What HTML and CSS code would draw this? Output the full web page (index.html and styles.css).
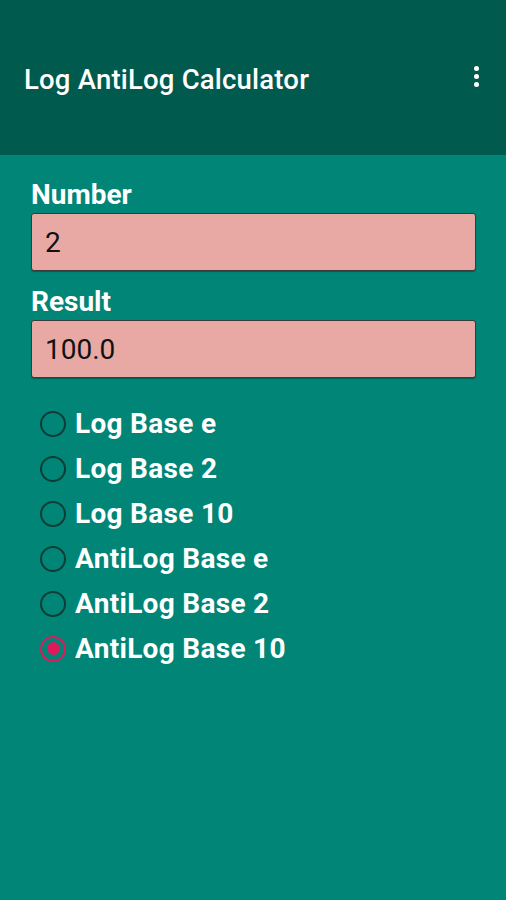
FILE: index.html
```html
<!DOCTYPE html>
<html>
<head>
<meta charset="utf-8">
<link rel="stylesheet" href="styles.css">
</head>
<body>
<header class="appbar">
  <h1 class="title">Log AntiLog Calculator</h1>
  <div class="menu"><span></span><span></span><span></span></div>
</header>
<main class="content">
  <label class="label">Number</label>
  <div class="field">2</div>
  <label class="label">Result</label>
  <div class="field">100.0</div>
  <ul class="radios">
    <li class="radio"><span class="dot"></span>Log Base e</li>
    <li class="radio"><span class="dot"></span>Log Base 2</li>
    <li class="radio"><span class="dot"></span>Log Base 10</li>
    <li class="radio"><span class="dot"></span>AntiLog Base e</li>
    <li class="radio"><span class="dot"></span>AntiLog Base 2</li>
    <li class="radio checked"><span class="dot"></span>AntiLog Base 10</li>
  </ul>
</main>
</body>
</html>
```
FILE: styles.css
```css
html, body {
  margin: 0;
  padding: 0;
  height: 100%;
}
body {
  background: #008577;
  font-family: Roboto, "Noto Sans", sans-serif;
  color: #fff;
}
.appbar {
  height: 155px;
  background: #005a4e;
  display: flex;
  align-items: center;
  justify-content: space-between;
  padding: 0 24px 0 24px;
  box-sizing: border-box;
}
.title {
  margin: 0;
  font-size: 27.5px;
  font-weight: 500;
  letter-spacing: 0.2px;
  margin-top: 3px;
}
.menu {
  display: flex;
  flex-direction: column;
  gap: 3px;
  margin-right: 3px;
  margin-top: -2px;
}
.menu span {
  width: 5px;
  height: 5px;
  border-radius: 50%;
  background: #fff;
}
.content {
  padding: 24px 30px 0 31px;
  display: flex;
  flex-direction: column;
}
.label {
  font-size: 28px;
  font-weight: 700;
  line-height: 32px;
  margin-bottom: 2px;
}
.field {
  height: 56px;
  background: #e8a9a5;
  border: 1px solid #3a3a3a;
  border-radius: 3px;
  font-size: 28px;
  color: #111;
  display: flex;
  align-items: center;
  padding-left: 13px;
  margin-bottom: 15px;
  box-shadow: 0 1px 1px rgba(0,0,0,0.3);
}
.radios {
  list-style: none;
  margin: 8px 0 0 0;
  padding: 0;
  display: flex;
  flex-direction: column;
}
.radio {
  height: 45px;
  display: flex;
  align-items: center;
  font-size: 28px;
  font-weight: 700;
  letter-spacing: 0.3px;
  gap: 9px;
  padding-left: 9px;
}
.dot {
  width: 26px;
  height: 26px;
  border: 2.5px solid #0c3d37;
  border-radius: 50%;
  box-sizing: border-box;
  display: flex;
  align-items: center;
  justify-content: center;
  flex-shrink: 0;
}
.radio.checked .dot {
  border-color: #e0195a;
}
.radio.checked .dot::after {
  content: "";
  width: 13px;
  height: 13px;
  border-radius: 50%;
  background: #e0195a;
}
```
